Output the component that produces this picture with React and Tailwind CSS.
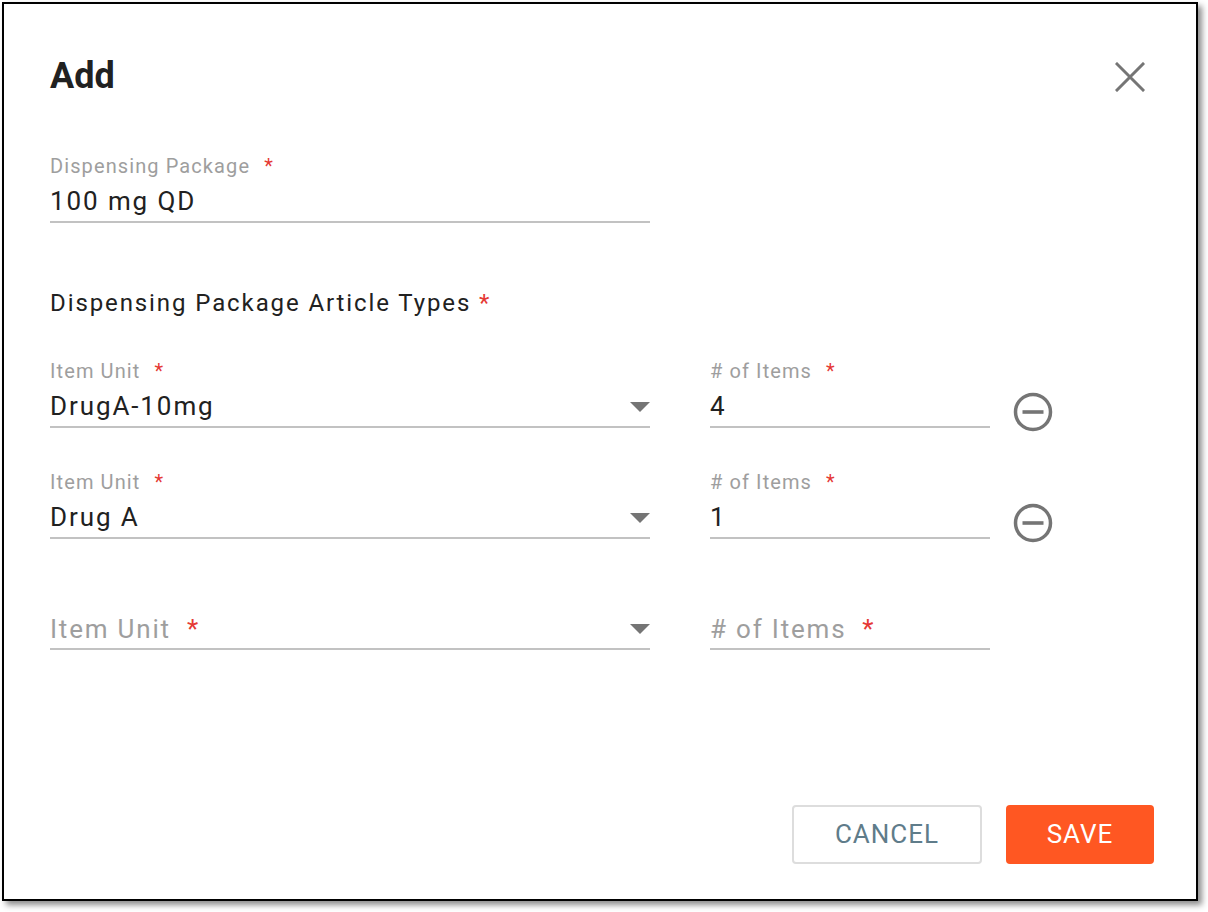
import React from "react";

const F = { fontFamily: "Roboto, 'Noto Sans', 'Liberation Sans', sans-serif" };

function Star({ cls = "" }) {
  return <span className={"text-[#e53935] " + cls}>*</span>;
}

function Triangle() {
  return (
    <svg width="20" height="10" viewBox="0 0 20 10" className="shrink-0 mt-[4px]">
      <path d="M0 0 L20 0 L10 10 Z" fill="#757575" />
    </svg>
  );
}

function MinusCircle() {
  return (
    <svg width="40" height="40" viewBox="0 0 40 40" className="shrink-0 ml-[23px] mt-[33px]">
      <circle cx="20" cy="20" r="17.5" fill="none" stroke="#757575" strokeWidth="3.5" />
      <rect x="9.5" y="18.2" width="21" height="3.6" fill="#757575" />
    </svg>
  );
}

function Field({ label, value, placeholder, width, select }) {
  return (
    <div className={"flex flex-col border-b-2 border-[#c2c2c2] pb-[7px] " + width}>
      <div className="h-[22px] pt-[1px] text-[20px] leading-[22px] text-[#9e9e9e] tracking-[1.1px] whitespace-nowrap">
        {label ? (
          <>
            {label}
            <Star cls="ml-[14px]" />
          </>
        ) : null}
      </div>
      <div className="mt-[10px] h-[28px] flex items-center justify-between">
        {value ? (
          <span className="pt-[1px] text-[26px] leading-[28px] text-[#212121] tracking-[1.9px] whitespace-nowrap">{value}</span>
        ) : (
          <span className="pt-[3px] text-[26px] leading-[28px] text-[#9e9e9e] tracking-[1.8px] whitespace-nowrap">
            {placeholder}
            <Star cls="ml-[16px]" />
          </span>
        )}
        {select ? <Triangle /> : null}
      </div>
    </div>
  );
}

function Row({ unit, count, removable }) {
  return (
    <div className="flex items-start h-[69px]">
      <Field
        label={unit ? "Item Unit" : null}
        value={unit}
        placeholder="Item Unit"
        width="w-[600px]"
        select
      />
      <div className="w-[60px] shrink-0" />
      <Field
        label={unit ? "# of Items" : null}
        value={count}
        placeholder="# of Items"
        width="w-[280px]"
      />
      {removable ? <MinusCircle /> : null}
    </div>
  );
}

export default function App() {
  return (
    <div className="w-[1208px] h-[912px] bg-white pt-[2px] pl-[2px]" style={F}>
      <div className="w-[1196px] h-[899px] border-2 border-black bg-white shadow-[4px_4px_6px_rgba(0,0,0,0.45)] flex flex-col pl-[46px] pr-[42px]">
        <div className="mt-[50px] h-[44px] flex items-center justify-between pr-[9px]">
          <h1 className="text-[36px] leading-[44px] font-bold text-[#212121]">Add</h1>
          <svg width="30" height="30" viewBox="0 0 30 30" className="mt-[2px]">
            <path d="M2 2 L28 28 M28 2 L2 28" stroke="#757575" strokeWidth="3" strokeLinecap="square" />
          </svg>
        </div>

        <div className="mt-[56px]">
          <Field label="Dispensing Package" value="100 mg QD" width="w-[600px]" />
        </div>

        <div className="mt-[67px] h-[26px] text-[24px] leading-[26px] text-[#212121] tracking-[1.9px] whitespace-nowrap">
          Dispensing Package Article Types <Star />
        </div>

        <div className="mt-[43px] flex flex-col gap-[42px]">
          <Row unit="DrugA-10mg" count="4" removable />
          <Row unit="Drug A" count="1" removable />
          <Row unit={null} count={null} />
        </div>

        <div className="flex-1" />

        <div className="flex justify-end gap-[24px] mb-[35px]">
          <button className="w-[190px] h-[59px] border-2 border-[#dddddd] rounded-[4px] text-[26px] text-[#5f7c8a] tracking-[1px] bg-white">
            CANCEL
          </button>
          <button className="w-[148px] h-[59px] rounded-[4px] text-[26px] text-white tracking-[1px] bg-[#ff5722]">
            SAVE
          </button>
        </div>
      </div>
    </div>
  );
}
